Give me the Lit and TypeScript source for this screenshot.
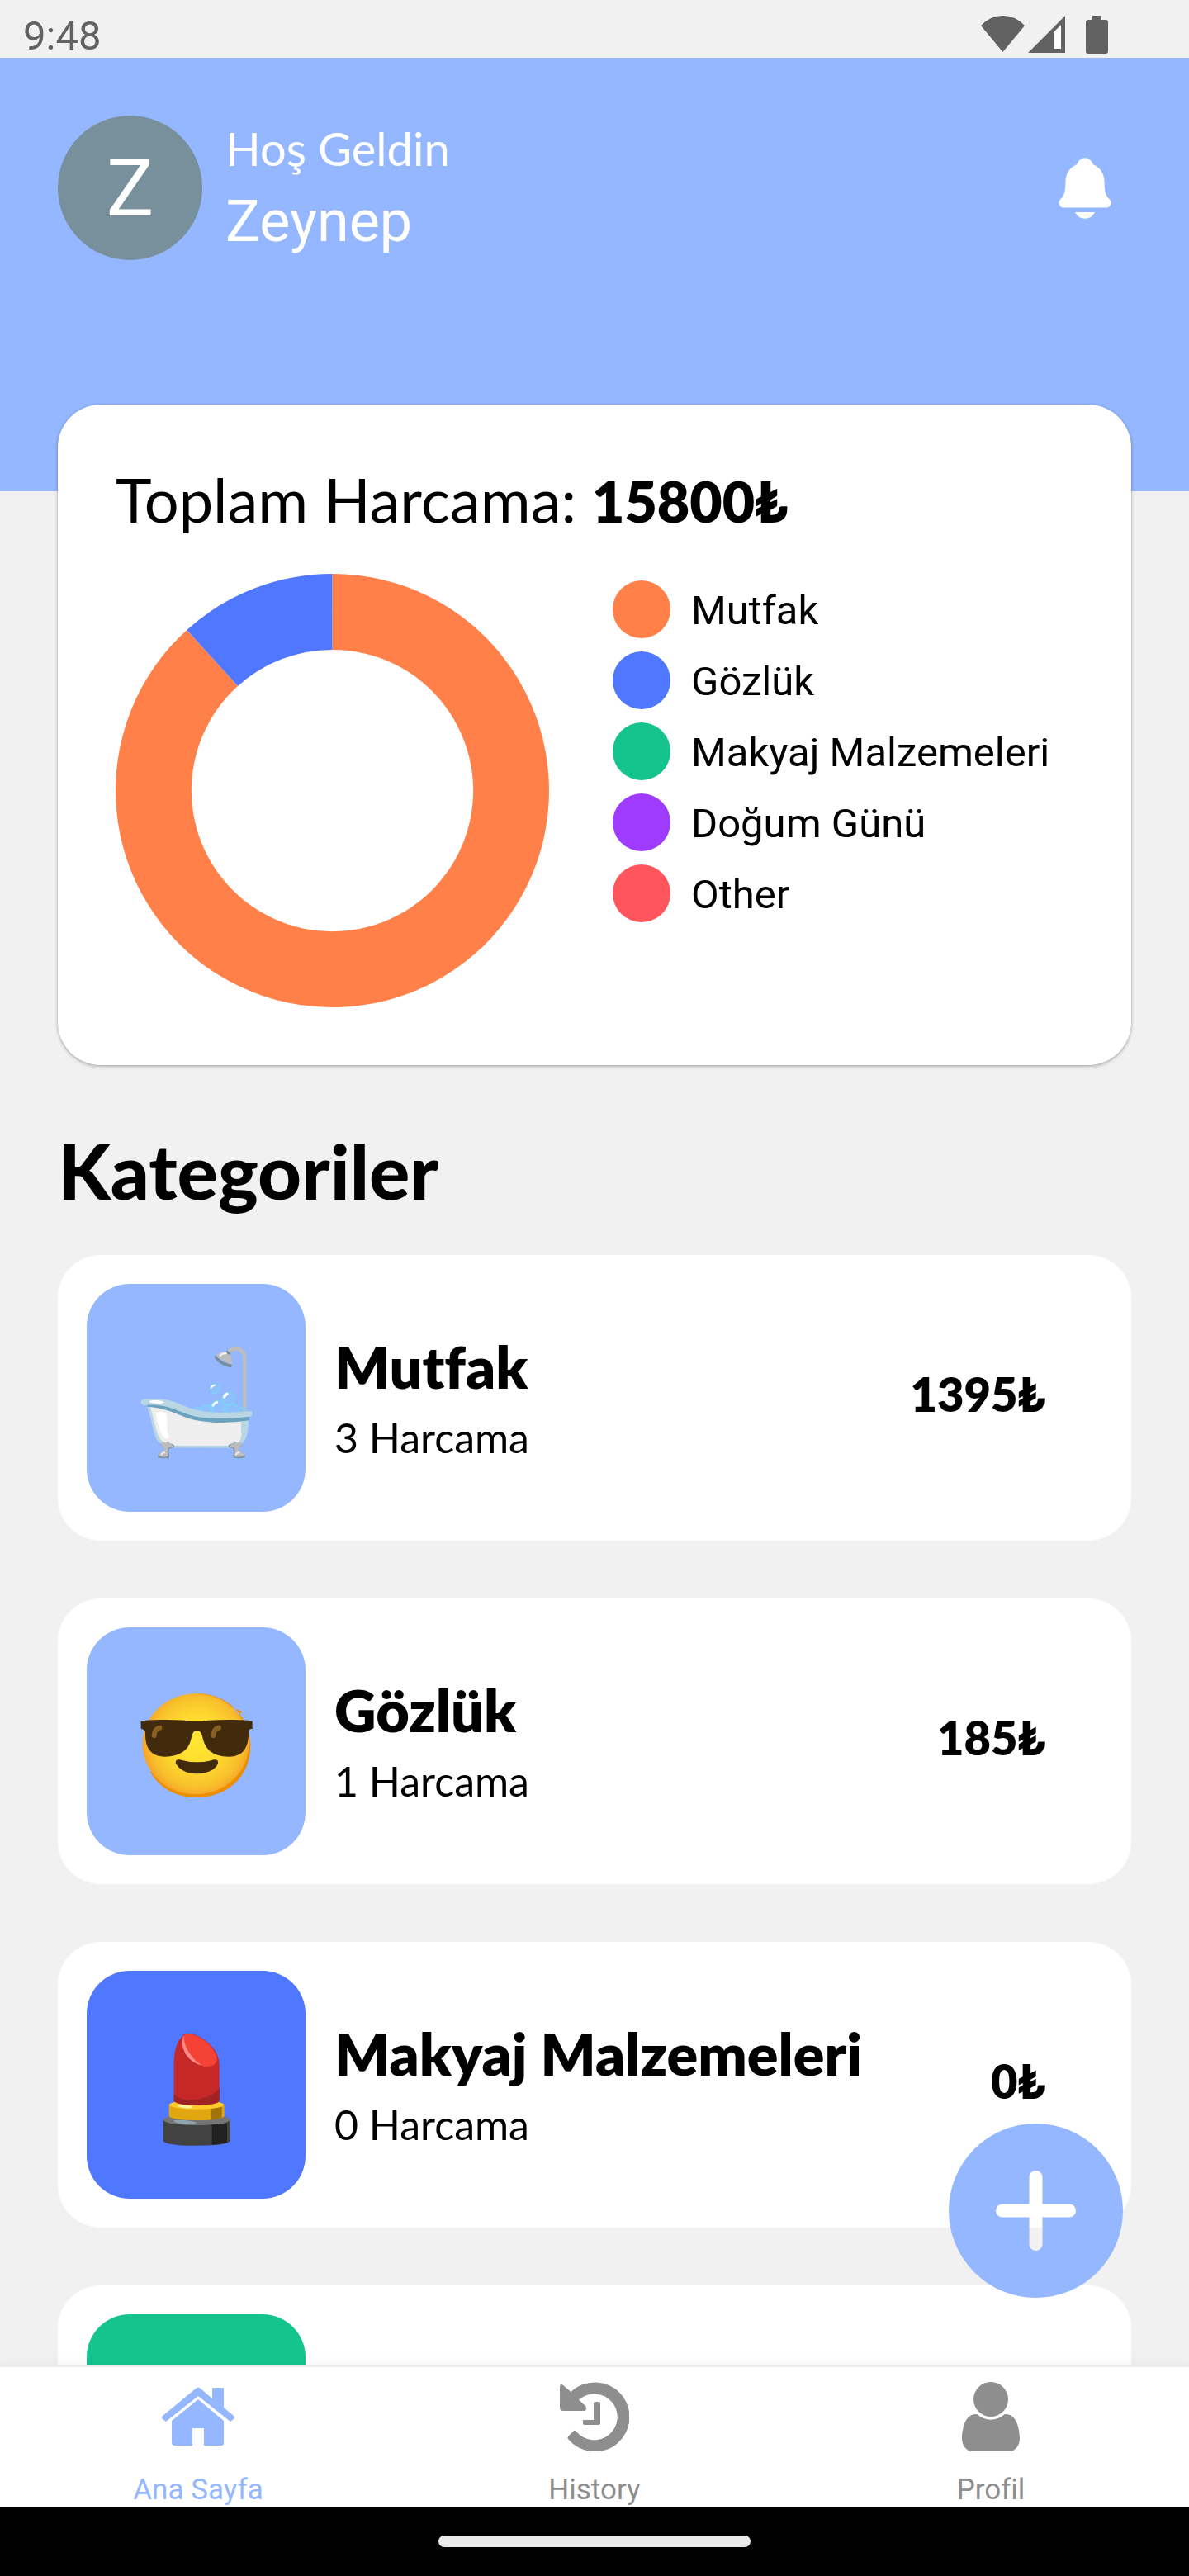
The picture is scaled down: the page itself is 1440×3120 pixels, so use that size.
import { LitElement, html, css, svg, nothing } from "lit";
import { customElement, property, state } from "lit/decorators.js";
import { styleMap } from "lit/directives/style-map.js";
import { classMap } from "lit/directives/class-map.js";

interface Slice {
  label: string;
  color: string;
  share: number;
}

interface Category {
  name: string;
  color: string;
  picture?: unknown;
  count?: number;
  total?: number;
}

const ORANGE = "#ff8049";
const BLUE = "#4f77ff";
const GREEN = "#15c48d";
const PURPLE = "#9f3bff";
const RED = "#ff565e";
const SKY = "#94b7ff";

const bathtub = html`
  <svg class="picture" viewBox="67 84 450 450" aria-hidden="true">
    <path d="M467 362V172Q467 131 434 131Q420 131 408 142" fill="none" stroke="#bdbdbd" stroke-width="13" />
    <path d="M361 158Q378 137 404 143Q424 155 420 190Z" fill="#bdbdbd" />
    <path d="M402 136L417 147L411 153L398 145Z" fill="#78909c" />
    <path d="M362 155Q384 182 420 188Q423 199 412 198Q375 190 358 164Q356 156 362 155Z" fill="#78909c" />
    <path d="M378 155Q386 146 399 147" fill="none" stroke="#eceff1" stroke-width="7" stroke-linecap="round" />
    <g fill="#80d8ff" fill-opacity=".25" stroke="#7fd0f4" stroke-width="5">
      <circle cx="358" cy="276" r="17" />
      <circle cx="408" cy="312" r="24" />
      <circle cx="296" cy="358" r="16" />
      <circle cx="330" cy="358" r="23" />
      <circle cx="372" cy="349" r="30" />
      <circle cx="419" cy="360" r="29" />
      <circle cx="459" cy="355" r="13" />
    </g>
    <g fill="none" stroke="#fff" stroke-width="8" stroke-linecap="round">
      <path d="M345 272Q349 264 358 263" stroke-width="6" />
      <path d="M393 306Q395 297 403 295" stroke-width="10" />
      <path d="M352 337Q357 327 367 325" />
    </g>
    <path d="M110 335L482 388C480 430 478 460 452 482Q440 490 415 491L210 490Q160 485 148 462C130 425 128 375 110 335Z" fill="#b9d6e5" />
    <path d="M122 340Q190 350 265 384Q360 405 456 393C450 425 462 445 448 467Q435 483 395 483H225Q185 483 162 462C140 430 138 378 122 340Z" fill="#eeeeee" />
    <path d="M145 368Q152 355 172 361Q188 368 186 398Q182 430 192 447Q190 462 178 457C160 440 148 400 145 368Z" fill="#fff" />
    <path d="M108 333C190 325 225 358 292 372Q380 390 484 374V391Q380 408 287 390C225 375 190 345 115 342Z" fill="#6ba3be" />
    <path d="M90 326Q90 312 112 313C210 308 225 335 295 354Q370 370 485 357Q495 358 495 367Q494 378 480 378Q370 390 290 377C230 365 190 327 104 336Q91 335 90 326Z" fill="#b9d6e5" />
    <ellipse cx="147" cy="324" rx="27" ry="6" fill="#fff" transform="rotate(3 147 324)" />
    <g>
      <path d="M160 478Q170 468 181 475Q190 462 194 476Q206 474 212 484Q211 493 196 491Q188 500 193 516V526Q170 532 151 524Q150 508 171 504L175 491Z" fill="#78909c" />
      <path d="M160 476Q170 466 181 473Q190 462 192 477Q202 476 207 483Q206 490 192 489Q184 500 190 514V522Q170 527 152 520Q153 506 171 503L175 491Z" fill="#bdbdbd" />
      <path d="M165 514Q168 508 175 508" stroke="#eceff1" stroke-width="6" fill="none" stroke-linecap="round" />
    </g>
    <g>
      <path d="M459 478Q449 468 438 475Q429 462 425 476Q413 474 407 484Q408 493 423 491Q431 500 426 516V526Q449 532 468 524Q469 508 448 504L444 491Z" fill="#78909c" />
      <path d="M459 476Q449 466 440 473Q430 462 428 477Q418 476 413 483Q414 490 427 489Q435 500 429 514V522Q449 527 467 520Q466 506 448 503L444 491Z" fill="#bdbdbd" />
      <path d="M436 514Q439 508 446 508" stroke="#eceff1" stroke-width="6" fill="none" stroke-linecap="round" />
    </g>
  </svg>
`;

const sunglasses = html`
  <svg class="picture" viewBox="67 42 450 450" aria-hidden="true">
    <defs>
      <radialGradient id="skin" cx="292" cy="270" r="205" gradientUnits="userSpaceOnUse">
        <stop offset="0" stop-color="#ffe635" />
        <stop offset=".45" stop-color="#ffdb2f" />
        <stop offset=".8" stop-color="#f8c02c" />
        <stop offset="1" stop-color="#f79c26" />
      </radialGradient>
    </defs>
    <path d="M294 93C405 93 488 180 488 283C488 395 405 471 294 471C210 471 155 430 125 380L460 160Z" fill="#eb8f00" />
    <ellipse cx="289" cy="277" rx="193" ry="183" fill="url(#skin)" />
    <path d="M90 194Q110 188 180 189Q250 189 270 195H315Q335 189 405 189Q475 188 495 194V221Q486 221 481 228C483 285 465 323 410 323C350 323 325 295 316 260C312 242 308 228 292 228C278 228 276 245 271 264C262 300 230 323 178 323C120 323 104 285 106 230Q100 222 90 221Z" fill="#422b0d" />
    <path d="M138 246Q139 223 158 218" stroke="#896024" stroke-width="18" stroke-linecap="round" fill="none" />
    <path d="M353 246Q354 223 373 218" stroke="#896024" stroke-width="18" stroke-linecap="round" fill="none" />
    <path d="M216 345Q216 331 230 334Q292 352 355 334Q372 331 370 347C362 370 330 385 292 385C255 385 225 368 216 345Z" fill="#422b0d" />
  </svg>
`;

const lipstick = html`
  <svg class="picture" viewBox="7 60 450 450" aria-hidden="true">
    <path d="M111 412V488Q120 506 233 506Q346 506 355 488V412Z" fill="#424242" />
    <path d="M288 425H343V495Q320 502 288 503Z" fill="#212121" />
    <path d="M343 420L355 412V488L343 495Z" fill="#424242" />
    <ellipse cx="233" cy="412" rx="122" ry="20" fill="#757575" />
    <ellipse cx="190" cy="421" rx="42" ry="7" fill="#90a4ae" transform="rotate(5 190 421)" />
    <path d="M132 358V400Q145 414 232 414Q320 414 333 400V358Z" fill="#e2a610" />
    <path d="M285 371L324 365V405Q305 411 285 413Z" fill="#9e740b" />
    <ellipse cx="232.500" cy="358" rx="100" ry="16" fill="#ffca28" />
    <ellipse cx="190" cy="364" rx="26" ry="6" fill="#fff59d" transform="rotate(6 190 364)" />
    <path d="M150 320V205Q151 130 188 101Q210 95 238 108Q315 150 315 215V345Q300 359 232 359Q165 359 150 345Z" fill="#c62828" />
    <path d="M150 320Q170 342 220 339Q290 334 315 297V345Q300 359 232 359Q165 359 150 345Z" fill="#a02323" />
    <path d="M182 108Q200 93 238 110Q295 140 307 190Q306 219 268 219Q220 215 190 165Q174 130 182 108Z" fill="#f44336" />
    <path d="M187 105Q183 132 202 163Q222 198 250 213Q215 209 191 172Q172 135 187 105Z" fill="#ff8a88" />
  </svg>
`;

const homeIcon = html`
  <svg class="glyph" width="90" height="84" viewBox="0 0 90 84" aria-hidden="true">
    <path d="M42 8Q45 5 48 8L62 20V9Q62 7 64 7H74Q76 7 76 9V31L88 41Q90 43 88 45L84 48L45 17L6 48L2 45Q0 43 2 41Z" />
    <path d="M45 21L76 47V73Q76 77 73 77H52V56H38V77H17Q13 77 13 73V47Z" />
  </svg>
`;

const historyIcon = html`
  <svg class="glyph" width="84" height="84" viewBox="0 0 84 84" aria-hidden="true">
    <path d="M0 7Q0 1 4 4L13.500 12A42 42 0 1 1 10 69Q9 68 10 66L17 59Q18 58 20 60A28 28 0 1 0 23 21.500L31 29Q32 30 32 32Q32 35 29 35H4Q0 35 0 31Z" />
    <path d="M43 24H47Q49 24 49 26V50Q49 52 47 52H30Q28 52 28 50V46H41V26Q41 24 43 24Z" />
  </svg>
`;

const profileIcon = html`
  <svg class="glyph" width="70" height="84" viewBox="0 0 70 84" aria-hidden="true">
    <circle cx="35" cy="21" r="21" />
    <path d="M18 39Q35 52.500 52 39C65 38 70 54 70 70Q69 80 60 84H10Q1 80 0 70C0 54 5 38 18 39Z" />
  </svg>
`;

/** Ring chart whose slices are proportional to their share, starting at twelve o'clock. */
@customElement("spend-donut")
class SpendDonut extends LitElement {
  @property({ attribute: false }) slices: Slice[] = [];

  static styles = css`
    :host {
      display: block;
      flex: 0 0 525px;
    }
    svg {
      display: block;
      width: 100%;
    }
  `;

  private point(fraction: number, radius: number) {
    const a = fraction * Math.PI * 2;
    return `${Math.sin(a) * radius} ${-Math.cos(a) * radius}`;
  }

  render() {
    const total = this.slices.reduce((sum, s) => sum + s.share, 0);
    let from = 0;
    const parts = this.slices
      .filter((s) => s.share > 0)
      .map((s) => {
        const to = from + s.share / total;
        const large = to - from > 0.5 ? 1 : 0;
        const d = `M${this.point(from, 1000)}A1000 1000 0 ${large} 1 ${this.point(to, 1000)}L${this.point(to, 650)}A650 650 0 ${large} 0 ${this.point(from, 650)}Z`;
        from = to;
        return svg`<path d=${d} fill=${s.color}></path>`;
      });
    return html`<svg viewBox="-1000 -1000 2000 2000" role="img" aria-label="Harcama">${parts}</svg>`;
  }
}

@customElement("category-row")
class CategoryRow extends LitElement {
  @property({ attribute: false }) category!: Category;

  static styles = css`
    :host {
      display: block;
    }
    .row {
      display: flex;
      align-items: center;
      gap: 35px;
      padding: 35px 105px 35px 35px;
      border-radius: 52px;
      background: #fff;
      color: #000;
      text-decoration: none;
    }
    .tile {
      display: flex;
      align-items: center;
      justify-content: center;
      flex: 0 0 265px;
      height: 276px;
      border-radius: 52px;
    }
    .picture {
      display: block;
      width: 150px;
      height: 150px;
    }
    .text {
      flex: 1;
      min-width: 0;
      padding-top: 4px;
    }
    .name {
      margin: 0;
      font-size: 70px;
      line-height: 88px;
      font-weight: 800;
    }
    .count {
      margin: 4px 0 0;
      font-size: 50px;
      line-height: 76px;
    }
    .total {
      padding-bottom: 8px;
      font-size: 56px;
      line-height: 76px;
      font-weight: 800;
    }
  `;

  render() {
    const c = this.category;
    return html`
      <a class="row" href="#">
        <span class="tile" style=${styleMap({ background: c.color })}>${c.picture ?? nothing}</span>
        ${c.count === undefined
          ? nothing
          : html`
              <div class="text">
                <h3 class="name">${c.name}</h3>
                <p class="count">${c.count} Harcama</p>
              </div>
              <span class="total">${c.total}₺</span>
            `}
      </a>
    `;
  }
}

@customElement("app-root")
class AppRoot extends LitElement {
  @state() private tab = "home";

  private slices: Slice[] = [
    { label: "Mutfak", color: ORANGE, share: 1395 },
    { label: "Gözlük", color: BLUE, share: 185 },
    { label: "Makyaj Malzemeleri", color: GREEN, share: 0 },
    { label: "Doğum Günü", color: PURPLE, share: 0 },
    { label: "Other", color: RED, share: 0 },
  ];

  private categories: Category[] = [
    { name: "Mutfak", color: SKY, picture: bathtub, count: 3, total: 1395 },
    { name: "Gözlük", color: SKY, picture: sunglasses, count: 1, total: 185 },
    { name: "Makyaj Malzemeleri", color: BLUE, picture: lipstick, count: 0, total: 0 },
    { name: "Doğum Günü", color: GREEN },
  ];

  private tabs = [
    { id: "home", label: "Ana Sayfa", icon: homeIcon },
    { id: "history", label: "History", icon: historyIcon },
    { id: "profile", label: "Profil", icon: profileIcon },
  ];

  static styles = css`
    :host {
      display: flex;
      flex-direction: column;
      height: 100vh;
      background: #f1f1f1;
      color: #000;
      font-family: Lato, "Open Sans", sans-serif;
      font-variant-ligatures: none;
    }
    .status {
      display: flex;
      align-items: flex-end;
      justify-content: space-between;
      height: 70px;
      padding: 0 98px 0 28px;
      box-sizing: border-box;
      color: #626262;
      font-family: Roboto, sans-serif;
      font-size: 49px;
      line-height: 52px;
    }
    .signals {
      display: flex;
      align-items: flex-start;
      height: 51px;
      fill: currentColor;
    }
    .wifi {
      margin-right: 4px;
    }
    .cell {
      margin-right: 25px;
    }
    .body {
      position: relative;
      display: flex;
      flex: 1;
      min-height: 0;
    }
    .scroll {
      flex: 1;
      overflow-y: auto;
      scrollbar-width: none;
    }
    .header {
      display: flex;
      align-items: center;
      gap: 28px;
      padding: 70px 84px 280px 70px;
      background: #94b7ff;
      color: #fff;
    }
    .avatar {
      display: flex;
      align-items: center;
      justify-content: center;
      width: 175px;
      height: 175px;
      border-radius: 50%;
      background: #78909c;
      font-family: Roboto, sans-serif;
      font-size: 96px;
      line-height: 112px;
    }
    .hello {
      display: grid;
      gap: 4px;
      flex: 1;
    }
    .greeting {
      margin: 0;
      font-size: 56px;
      line-height: 76px;
    }
    .user {
      margin: 0;
      font-family: Roboto, sans-serif;
      font-size: 70px;
      font-weight: 400;
      line-height: 92px;
    }
    button {
      border: 0;
      padding: 0;
      background: none;
      color: inherit;
      font: inherit;
      cursor: pointer;
    }
    button svg {
      display: block;
      fill: currentColor;
    }
    .summary {
      position: relative;
      margin: -105px 70px 0;
      padding: 70px;
      border-radius: 52px;
      background: #fff;
      box-shadow: 0 2px 4px rgba(0, 0, 0, 0.24), 0 0 3px rgba(0, 0, 0, 0.12);
    }
    .sum {
      margin: 0 0 45px;
      font-size: 74px;
      font-weight: 400;
      line-height: 90px;
    }
    .amount {
      font-size: 68px;
      line-height: 70px;
      font-weight: 800;
    }
    .chart {
      display: flex;
      align-items: flex-start;
      gap: 77px;
    }
    .legend {
      display: grid;
      gap: 16px;
      margin: 0;
      padding: 8px 0 0;
      list-style: none;
      font-family: Roboto, sans-serif;
      font-size: 49px;
      line-height: 74px;
    }
    .key {
      display: flex;
      gap: 25px;
      height: 70px;
      white-space: nowrap;
    }
    .dot {
      width: 70px;
      height: 70px;
      border-radius: 50%;
    }
    .list {
      display: grid;
      gap: 70px;
      padding: 70px;
    }
    .title {
      margin: 0 0 -25px;
      font-size: 92px;
      line-height: 115px;
      font-weight: 900;
    }
    .add {
      position: absolute;
      right: 80px;
      bottom: 81px;
      color: #94b7ff;
    }
    .tabs {
      position: relative;
      display: grid;
      grid-template-columns: repeat(3, 1fr);
      border-top: 3px solid #ebebeb;
      padding: 18px 0 0;
      background: #fff;
      box-shadow: 0 -2px 12px rgba(0, 0, 0, 0.04);
      font-family: Roboto, sans-serif;
      font-size: 35px;
      line-height: 40px;
    }
    .tab {
      display: flex;
      flex-direction: column;
      align-items: center;
      gap: 27px;
      color: #8e8e8e;
    }
    .tab.active {
      color: #94b7ff;
    }
    .home-bar {
      display: flex;
      align-items: center;
      justify-content: center;
      height: 84px;
      background: #000;
    }
    .handle {
      width: 378px;
      height: 14px;
      border-radius: 7px;
      background: #ebebeb;
    }
  `;

  render() {
    return html`
      <div class="status">
        <span>9:48</span>
        <span class="signals">
          <svg class="wifi" width="53" height="46" viewBox="0 0 53 46" aria-hidden="true">
            <path d="M0 12Q11 0 26.500 0T53 12L26.500 44Z" />
          </svg>
          <svg class="cell" width="45" height="46" viewBox="0 0 45 46" aria-hidden="true">
            <path fill="#fff" d="M30 21L40 11V41H30Z" />
            <path fill-rule="evenodd" d="M45 0V45H0ZM31 20V40H40V11Z" />
          </svg>
          <svg width="27" height="46" viewBox="0 0 27 46" aria-hidden="true">
            <path d="M8 0H19V5H24Q27 5 27 8V43Q27 46 24 46H3Q0 46 0 43V8Q0 5 3 5H8Z" />
          </svg>
        </span>
      </div>

      <div class="body">
        <main class="scroll">
          <header class="header">
            <span class="avatar">Z</span>
            <div class="hello">
              <p class="greeting">Hoş Geldin</p>
              <h1 class="user">Zeynep</h1>
            </div>
            <button type="button" aria-label="Bildirimler">
              <svg width="84" height="84" viewBox="0 0 512 512" aria-hidden="true">
                <path d="M440.08 341.31c-1.66-2-3.29-4-4.89-5.93-22-26.61-35.31-42.67-35.31-118 0-39-9.33-71-27.72-95-13.56-17.73-31.89-31.18-56.05-41.12a3 3 0 01-.82-.67C306.6 51.49 282.82 32 256 32s-50.59 19.49-59.28 48.56a3.13 3.13 0 01-.81.65c-56.38 23.21-83.78 67.74-83.78 136.14 0 75.36-13.29 91.42-35.31 118-1.6 1.93-3.23 3.89-4.89 5.93a35.16 35.16 0 00-4.65 37.62c6.17 13 19.32 21.07 34.33 21.07H410.5c14.94 0 28-8.06 34.19-21a35.17 35.17 0 00-4.61-37.66zM256 480a80.06 80.06 0 0070.44-42.13 4 4 0 00-3.54-5.87H189.12a4 4 0 00-3.55 5.87A80.06 80.06 0 00256 480z" />
              </svg>
            </button>
          </header>

          <section class="summary">
            <h2 class="sum">Toplam Harcama: <b class="amount">15800₺</b></h2>
            <div class="chart">
              <spend-donut .slices=${this.slices}></spend-donut>
              <ul class="legend">
                ${this.slices.map(
                  (s) => html`
                    <li class="key">
                      <span class="dot" style=${styleMap({ background: s.color })}></span>
                      <span>${s.label}</span>
                    </li>
                  `,
                )}
              </ul>
            </div>
          </section>

          <section class="list">
            <h2 class="title">Kategoriler</h2>
            ${this.categories.map((c) => html`<category-row .category=${c}></category-row>`)}
          </section>
        </main>

        <button class="add" type="button" aria-label="Ekle">
          <svg width="211" height="211" viewBox="0 0 211 211" aria-hidden="true">
            <path
              fill-rule="evenodd"
              d="M105.500 0A105.500 105.500 0 1 1 105.500 211A105.500 105.500 0 1 1 105.500 0ZM97.500 65V97.500H65A8 8 0 0 0 65 113.500H97.500V146A8 8 0 0 0 113.500 146V113.500H146A8 8 0 0 0 146 97.500H113.500V65A8 8 0 0 0 97.500 65Z"
            />
          </svg>
        </button>
      </div>

      <nav class="tabs">
        ${this.tabs.map(
          (t) => html`
            <button
              type="button"
              class=${classMap({ tab: true, active: t.id === this.tab })}
              @click=${() => (this.tab = t.id)}
            >
              ${t.icon}
              <span>${t.label}</span>
            </button>
          `,
        )}
      </nav>
      <div class="home-bar"><span class="handle"></span></div>
    `;
  }
}
